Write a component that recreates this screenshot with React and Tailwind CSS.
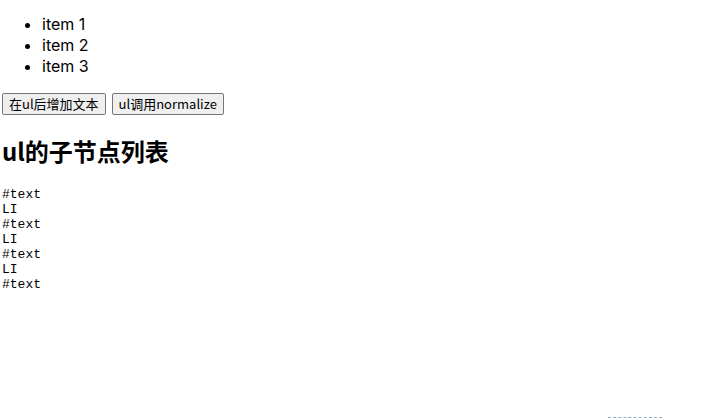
export default function App() {
  const lines = ["#text", "LI", "#text", "LI", "#text", "LI", "#text"];
  return (
    <div className="relative w-[708px] h-[419px] overflow-hidden bg-white text-black pl-[2px] font-['Noto_Sans_CJK_SC','Liberation_Sans',sans-serif]">
      <ul className="list-disc pl-[40px] pt-[14px] text-[16px] leading-[21px] font-['Inter','Noto_Sans_CJK_SC',sans-serif]">
        <li>item 1</li>
        <li>item 2</li>
        <li>item 3</li>
      </ul>
      <div className="flex gap-[6px] mt-[16px]">
        <button className="h-[22px] px-[6px] border border-[#767676] rounded-[2px] bg-[#efefef] text-[13px] leading-[18px] font-['Noto_Sans_CJK_SC','Liberation_Sans',sans-serif]">
          在ul后增加文本
        </button>
        <button className="h-[22px] px-[6px] border border-[#767676] rounded-[2px] bg-[#efefef] text-[13px] leading-[18px] font-['Noto_Sans_CJK_SC','Liberation_Sans',sans-serif]">
          ul调用normalize
        </button>
      </div>
      <h2 className="mt-[20px] text-[24px] leading-[32px] font-bold font-['Noto_Sans_CJK_SC','Liberation_Sans',sans-serif]">
        ul的子节点列表
      </h2>
      <div className="mt-[20px] text-[13px] leading-[15px] font-['Liberation_Mono','DejaVu_Sans_Mono',monospace]">
        {lines.map((l, i) => (
          <div key={i}>{l}</div>
        ))}
      </div>
      <div className="absolute left-[608px] top-[417px] w-[54px] border-t border-dashed border-[#8fb3c4]"></div>
    </div>
  );
}
